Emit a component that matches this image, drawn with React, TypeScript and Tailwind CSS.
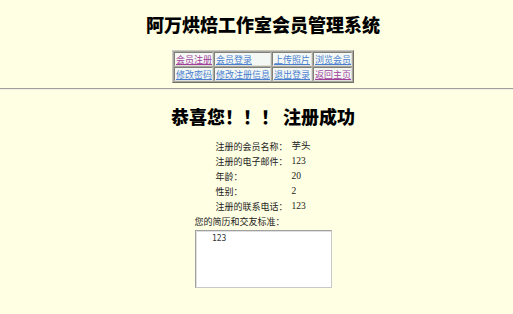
const navLinks = [
  { text: "会员注册", visited: true },
  { text: "会员登录", visited: false },
  { text: "上传照片", visited: false },
  { text: "浏览会员", visited: false },
  { text: "修改密码", visited: false },
  { text: "修改注册信息", visited: false },
  { text: "退出登录", visited: false },
  { text: "返回主页", visited: true },
];

const info = [
  ["注册的会员名称：", "芋头"],
  ["注册的电子邮件：", "123"],
  ["年龄：", "20"],
  ["性别：", "2"],
  ["注册的联系电话：", "123"],
];

export default function App() {
  return (
    <main className="w-[513px] h-[314px] overflow-hidden bg-[#ffffe3] text-black font-['Noto_Sans_CJK_SC',sans-serif]">
      <div className="pl-[13px] flex flex-col items-center">
        <h1 className="mt-[12px] h-[24px] leading-[24px] text-[18px] font-extrabold">
          阿万烘焙工作室会员管理系统
        </h1>
        <div className="mt-[14px] border border-t-[#c8c8c0] border-l-[#c8c8c0] border-b-[#707068] border-r-[#707068] bg-[#a8a8a0] p-[1px]">
          <div className="grid grid-cols-[39px_57px_40px_39px] gap-[1px]">
            {navLinks.map((l) => (
              <div
                key={l.text}
                className="h-[14px] bg-[#f4f8f4] border border-t-[#808078] border-l-[#808078] border-b-[#e0e0d8] border-r-[#e0e0d8] flex items-center px-[1px]"
              >
                <a
                  className={
                    "text-[9px] leading-none underline whitespace-nowrap " +
                    (l.visited ? "text-[#a0409a]" : "text-[#4a7fd0]")
                  }
                >
                  {l.text}
                </a>
              </div>
            ))}
          </div>
        </div>
      </div>
      <div className="mt-[5px] h-[2px] border-t border-t-[#a0a098] border-b border-b-[#f0f0e8]" />
      <div className="pl-[13px] flex flex-col items-center">
        <h2 className="mt-[14px] h-[24px] leading-[24px] text-[18px] font-extrabold">
          恭喜您！！！ 注册成功
        </h2>
        <div className="mt-[11px] flex flex-col w-[95px]">
          {info.map(([k, v]) => (
            <div key={k} className="h-[15px] flex items-center text-[9px] leading-none whitespace-nowrap text-[#222]">
              <span className="w-[76px]">{k}</span>
              <span className="font-['Liberation_Serif','Noto_Sans_CJK_SC',serif] text-[9.5px]">{v}</span>
            </div>
          ))}
        </div>
        <div className="w-[137px] flex flex-col">
          <div className="h-[15px] flex items-center text-[9px] leading-none text-[#222]">您的简历和交友标准：</div>
          <div className="mt-[1px] h-[58px] bg-white border border-t-[#a0a0a0] border-l-[#a0a0a0] border-b-[#c8c8c8] border-r-[#c8c8c8] shadow-[inset_1px_1px_0_#e0e0e0] px-[2px] py-[3px] font-['DejaVu_Sans_Mono',monospace] text-[8px] leading-[10px] whitespace-pre text-[#333]">
            {"   123"}
          </div>
        </div>
      </div>
    </main>
  );
}
